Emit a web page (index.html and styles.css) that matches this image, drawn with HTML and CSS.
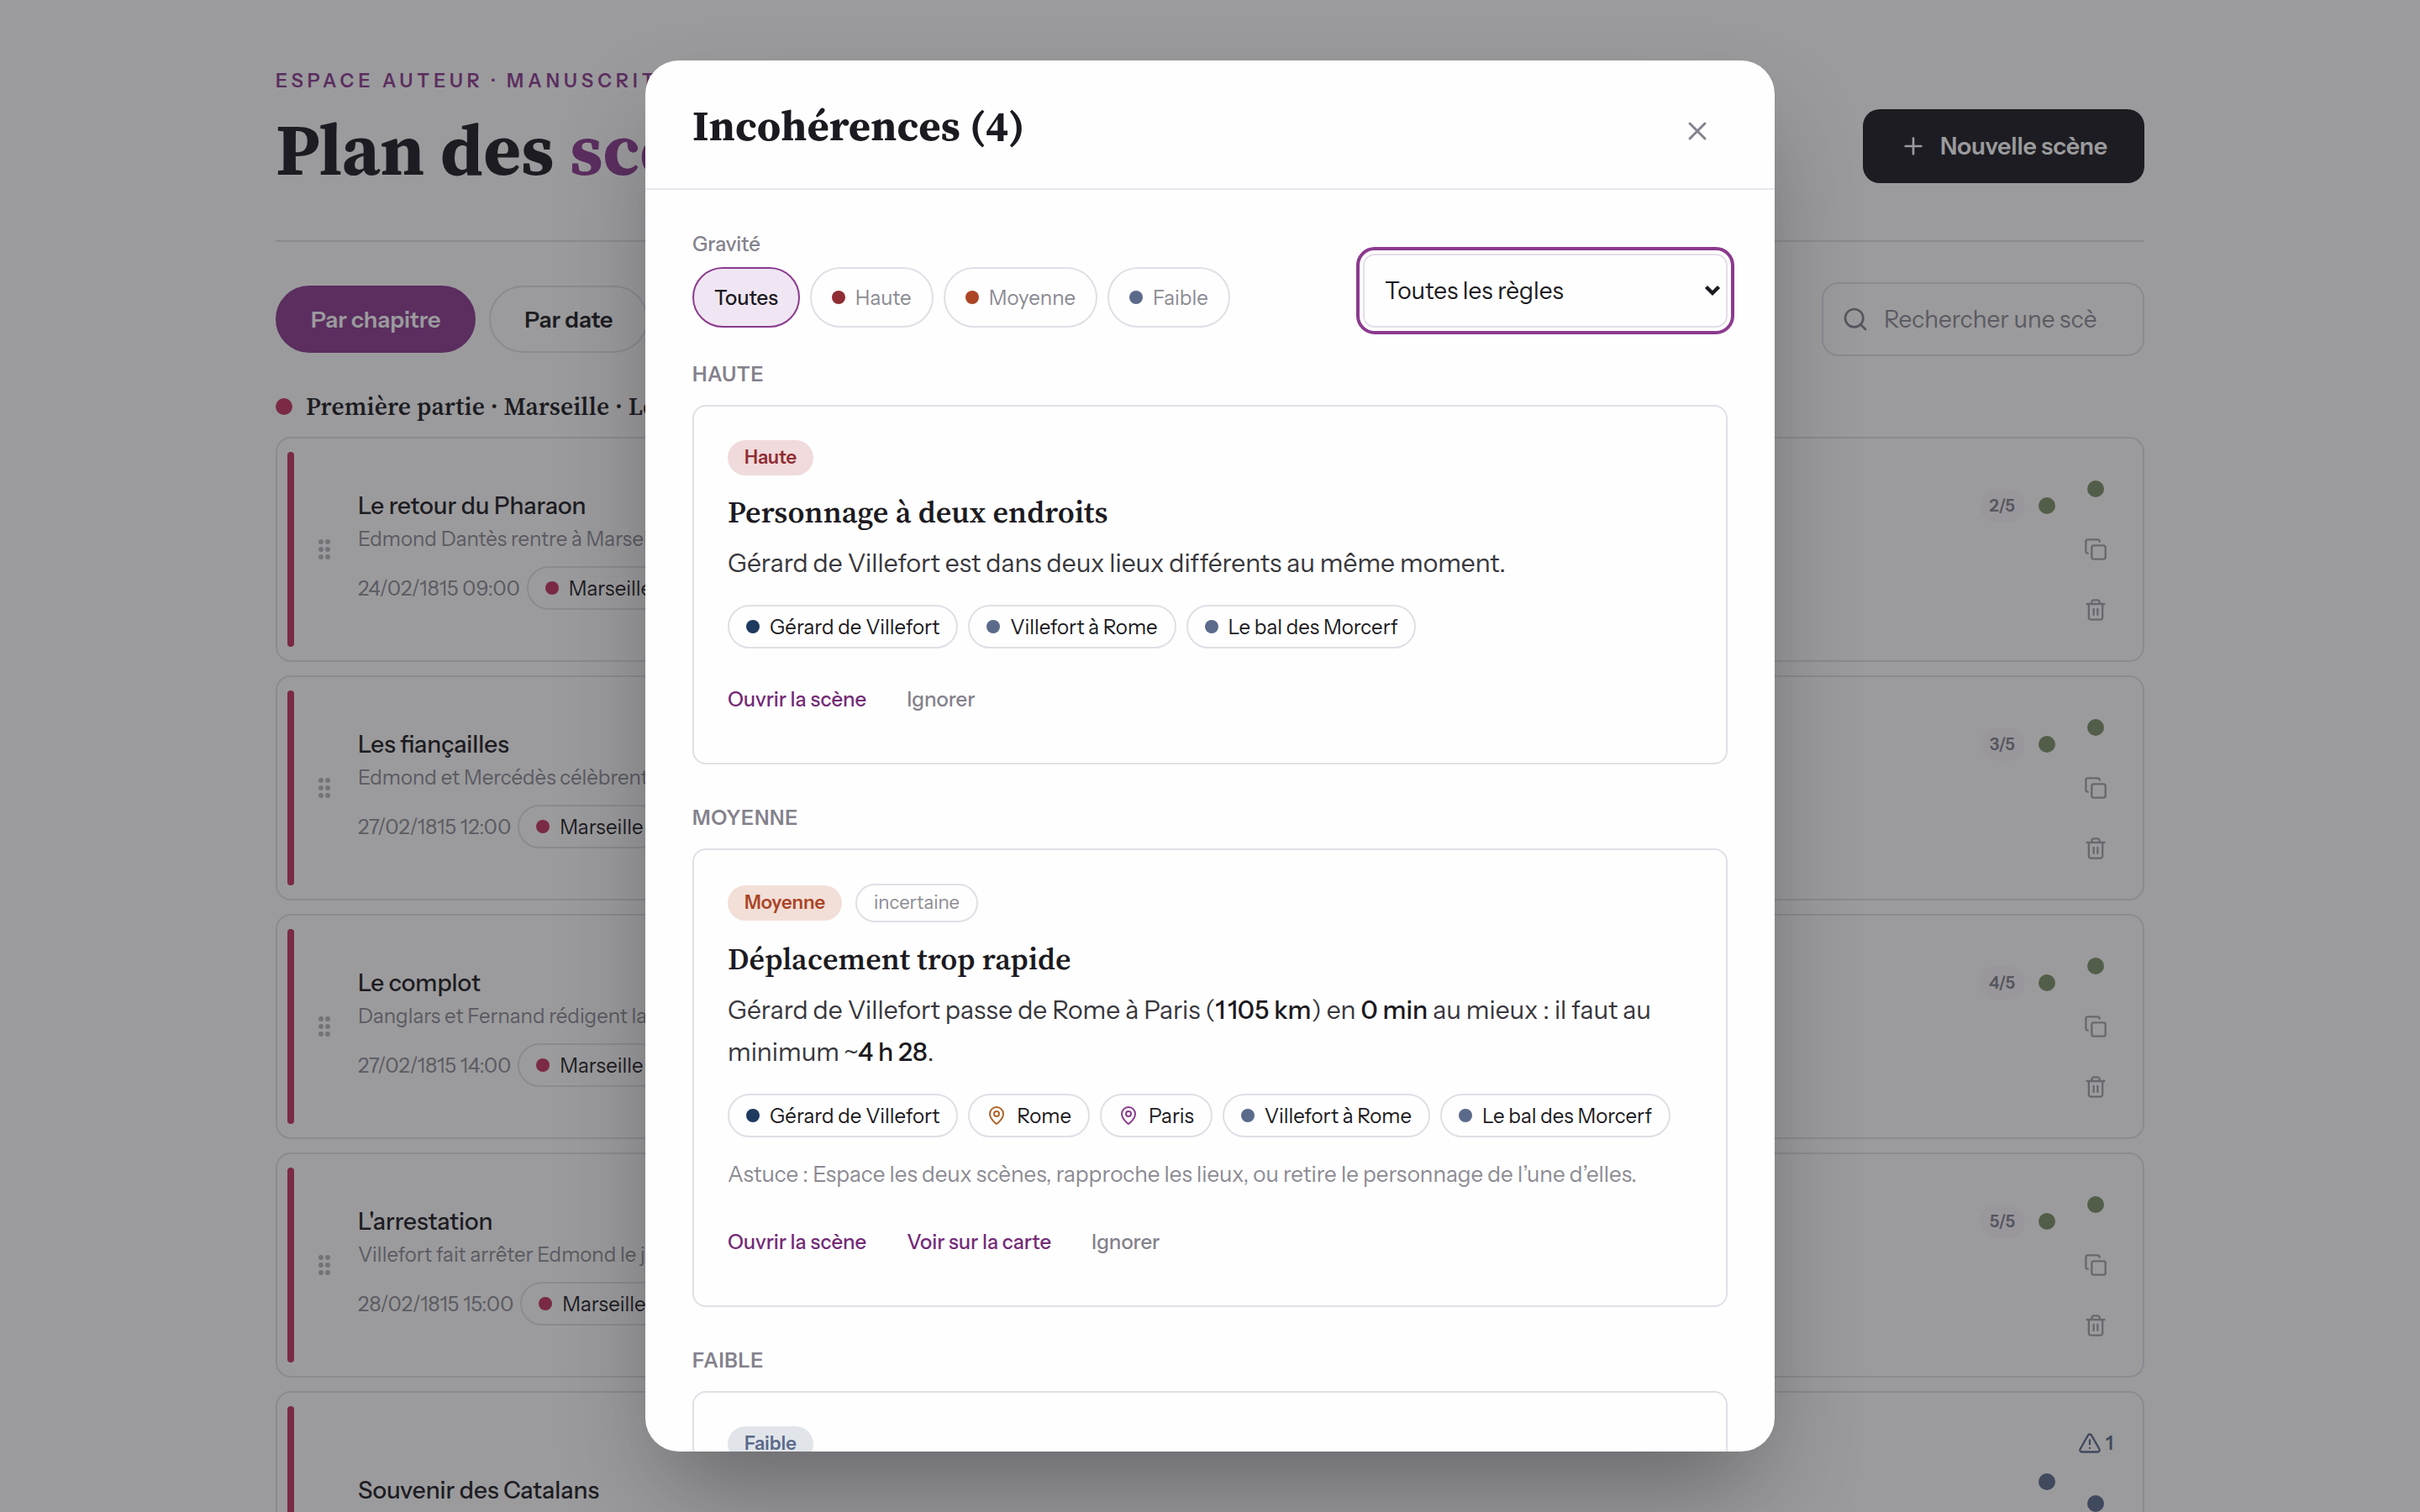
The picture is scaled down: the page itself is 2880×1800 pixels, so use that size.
FILE: index.html
```html
<!DOCTYPE html>
<html lang="fr">
<head>
<meta charset="utf-8">
<title>Plan des scènes</title>
<link rel="stylesheet" href="styles.css">
</head>
<body>
<svg class="sprite" aria-hidden="true">
  <symbol id="i-plus" viewBox="0 0 24 24"><path d="M5 12h14M12 5v14"/></symbol>
  <symbol id="i-search" viewBox="0 0 24 24"><circle cx="11" cy="11" r="8"/><path d="m21 21-4.3-4.3"/></symbol>
  <symbol id="i-x" viewBox="0 0 24 24"><path d="M18 6 6 18M6 6l12 12"/></symbol>
  <symbol id="i-copy" viewBox="0 0 24 24"><rect x="8" y="8" width="14" height="14" rx="2"/><path d="M4 16c-1.1 0-2-.9-2-2V4c0-1.1.9-2 2-2h10c1.1 0 2 .9 2 2"/></symbol>
  <symbol id="i-trash" viewBox="0 0 24 24"><path d="M3 6h18M19 6v14c0 1-1 2-2 2H7c-1 0-2-1-2-2V6M8 6V4c0-1 1-2 2-2h4c1 0 2 1 2 2v2M10 11v6M14 11v6"/></symbol>
  <symbol id="i-alert" viewBox="0 0 24 24"><path d="m21.73 18-8-14a2 2 0 0 0-3.48 0l-8 14A2 2 0 0 0 4 21h16a2 2 0 0 0 1.73-3M12 9v4M12 17h.01"/></symbol>
  <symbol id="i-pin" viewBox="0 0 24 24"><path d="M20 10c0 4.993-5.539 10.193-7.399 11.799a1 1 0 0 1-1.202 0C9.539 20.193 4 14.993 4 10a8 8 0 0 1 16 0"/><circle cx="12" cy="10" r="3"/></symbol>
  <symbol id="i-grip" viewBox="0 0 16 24"><circle cx="4" cy="3" r="3"/><circle cx="12" cy="3" r="3"/><circle cx="4" cy="12" r="3"/><circle cx="12" cy="12" r="3"/><circle cx="4" cy="21" r="3"/><circle cx="12" cy="21" r="3"/></symbol>
</svg>

<main class="page">
  <header class="page-head">
    <div>
      <p class="eyebrow">Espace auteur · Manuscrit</p>
      <h1 class="page-title">Plan des <span class="accent">scènes</span></h1>
    </div>
    <button class="btn-new"><svg class="icon icon-32"><use href="#i-plus"/></svg>Nouvelle scène</button>
  </header>

  <div class="toolbar">
    <div class="tabs">
      <button class="tab tab-on">Par chapitre</button>
      <button class="tab">Par date</button>
    </div>
    <label class="search"><svg class="icon icon-32"><use href="#i-search"/></svg><span class="search-text">Rechercher une scène</span></label>
  </div>

  <h2 class="part"><span class="part-dot"></span>Première partie · Marseille · Le retour</h2>

  <div class="scenes">
    <article class="scene">
      <span class="bar"></span>
      <span class="grip"><svg class="grip-icon"><use href="#i-grip"/></svg></span>
      <div class="scene-main">
        <div class="scene-text">
          <h3 class="scene-title">Le retour du Pharaon</h3>
          <p class="scene-desc">Edmond Dantès rentre à Marseille</p>
          <div class="scene-meta"><span>24/02/1815 09:00</span><span class="chip"><i class="dot crimson"></i>Marseille</span></div>
        </div>
        <div class="status"><span class="count">2/5</span><i class="dot-lg green"></i></div>
      </div>
      <div class="side">
        <span class="cell"><i class="dot-lg green"></i></span>
        <span class="cell"><svg class="icon icon-28"><use href="#i-copy"/></svg></span>
        <span class="cell"><svg class="icon icon-28"><use href="#i-trash"/></svg></span>
      </div>
    </article>

    <article class="scene">
      <span class="bar"></span>
      <span class="grip"><svg class="grip-icon"><use href="#i-grip"/></svg></span>
      <div class="scene-main">
        <div class="scene-text">
          <h3 class="scene-title">Les fiançailles</h3>
          <p class="scene-desc">Edmond et Mercédès célèbrent</p>
          <div class="scene-meta"><span>27/02/1815 12:00</span><span class="chip"><i class="dot crimson"></i>Marseille</span></div>
        </div>
        <div class="status"><span class="count">3/5</span><i class="dot-lg green"></i></div>
      </div>
      <div class="side">
        <span class="cell"><i class="dot-lg green"></i></span>
        <span class="cell"><svg class="icon icon-28"><use href="#i-copy"/></svg></span>
        <span class="cell"><svg class="icon icon-28"><use href="#i-trash"/></svg></span>
      </div>
    </article>

    <article class="scene">
      <span class="bar"></span>
      <span class="grip"><svg class="grip-icon"><use href="#i-grip"/></svg></span>
      <div class="scene-main">
        <div class="scene-text">
          <h3 class="scene-title">Le complot</h3>
          <p class="scene-desc">Danglars et Fernand rédigent la</p>
          <div class="scene-meta"><span>27/02/1815 14:00</span><span class="chip"><i class="dot crimson"></i>Marseille</span></div>
        </div>
        <div class="status"><span class="count">4/5</span><i class="dot-lg green"></i></div>
      </div>
      <div class="side">
        <span class="cell"><i class="dot-lg green"></i></span>
        <span class="cell"><svg class="icon icon-28"><use href="#i-copy"/></svg></span>
        <span class="cell"><svg class="icon icon-28"><use href="#i-trash"/></svg></span>
      </div>
    </article>

    <article class="scene">
      <span class="bar"></span>
      <span class="grip"><svg class="grip-icon"><use href="#i-grip"/></svg></span>
      <div class="scene-main">
        <div class="scene-text">
          <h3 class="scene-title">L'arrestation</h3>
          <p class="scene-desc">Villefort fait arrêter Edmond le jour</p>
          <div class="scene-meta"><span>28/02/1815 15:00</span><span class="chip"><i class="dot crimson"></i>Marseille</span></div>
        </div>
        <div class="status"><span class="count">5/5</span><i class="dot-lg green"></i></div>
      </div>
      <div class="side">
        <span class="cell"><i class="dot-lg green"></i></span>
        <span class="cell"><svg class="icon icon-28"><use href="#i-copy"/></svg></span>
        <span class="cell"><svg class="icon icon-28"><use href="#i-trash"/></svg></span>
      </div>
    </article>

    <article class="scene">
      <span class="bar"></span>
      <span class="grip"></span>
      <div class="scene-main">
        <div class="scene-text">
          <h3 class="scene-title">Souvenir des Catalans</h3>
        </div>
        <div class="status"><i class="dot-lg slate"></i></div>
      </div>
      <div class="side">
        <span class="cell alert"><svg class="icon icon-28"><use href="#i-alert"/></svg>1</span>
        <span class="cell"><i class="dot-lg slate"></i></span>
        <span class="cell"></span>
        <span class="cell"></span>
      </div>
    </article>
  </div>
</main>

<div class="overlay">
  <section class="modal" role="dialog" aria-modal="true">
    <header class="modal-head">
      <h2 class="modal-title">Incohérences (4)</h2>
      <button class="close" aria-label="Fermer"><svg class="icon icon-36"><use href="#i-x"/></svg></button>
    </header>

    <div class="modal-body">
      <div class="filters">
        <div>
          <p class="filter-label">Gravité</p>
          <div class="pills">
            <button class="pill pill-on">Toutes</button>
            <button class="pill"><i class="dot red"></i>Haute</button>
            <button class="pill"><i class="dot rust"></i>Moyenne</button>
            <button class="pill"><i class="dot slate"></i>Faible</button>
          </div>
        </div>
        <div class="select" tabindex="0">Toutes les règles<svg class="chevron" viewBox="0 0 20 14"><path d="m2.5 2.5 7.500 7.500 7.500-7.500"/></svg></div>
      </div>

      <h3 class="group">Haute</h3>
      <article class="issue">
        <div class="badges"><span class="badge badge-red">Haute</span></div>
        <h4 class="issue-title">Personnage à deux endroits</h4>
        <p class="issue-text">Gérard de Villefort est dans deux lieux différents au même moment.</p>
        <div class="chips">
          <span class="chip"><i class="dot navy"></i>Gérard de Villefort</span>
          <span class="chip"><i class="dot slate"></i>Villefort à Rome</span>
          <span class="chip"><i class="dot slate"></i>Le bal des Morcerf</span>
        </div>
        <div class="actions"><a class="link">Ouvrir la scène</a><a class="link link-muted">Ignorer</a></div>
      </article>

      <h3 class="group">Moyenne</h3>
      <article class="issue">
        <div class="badges"><span class="badge badge-rust">Moyenne</span><span class="badge badge-outline">incertaine</span></div>
        <h4 class="issue-title">Déplacement trop rapide</h4>
        <p class="issue-text">Gérard de Villefort passe de Rome à Paris (<strong>1&#8239;105 km</strong>) en <strong>0 min</strong> au mieux : il faut au minimum ~<strong>4 h 28</strong>.</p>
        <div class="chips">
          <span class="chip"><i class="dot navy"></i>Gérard de Villefort</span>
          <span class="chip"><svg class="icon icon-24 pin-amber"><use href="#i-pin"/></svg>Rome</span>
          <span class="chip"><svg class="icon icon-24 pin-purple"><use href="#i-pin"/></svg>Paris</span>
          <span class="chip"><i class="dot slate"></i>Villefort à Rome</span>
          <span class="chip"><i class="dot slate"></i>Le bal des Morcerf</span>
        </div>
        <p class="tip">Astuce : Espace les deux scènes, rapproche les lieux, ou retire le personnage de l’une d’elles.</p>
        <div class="actions"><a class="link">Ouvrir la scène</a><a class="link">Voir sur la carte</a><a class="link link-muted">Ignorer</a></div>
      </article>

      <h3 class="group">Faible</h3>
      <article class="issue issue-cut">
        <div class="badges"><span class="badge badge-slate">Faible</span></div>
      </article>
    </div>
  </section>
</div>
</body>
</html>
```
FILE: styles.css
```css
:root {
  --ink: #1c1a21;
  --text: #38373c;
  --muted: #84818c;
  --soft: #8c8a93;
  --line: #e0dfe6;
  --purple: #8b3a8e;
  --purple-dark: #742a77;
  --sans: "Instrument Sans", Roboto, "Liberation Sans", sans-serif;
  --serif: "Source Serif 4", "Liberation Serif", serif;
}

* { box-sizing: border-box; margin: 0; padding: 0; }

body {
  height: 1800px;
  overflow: hidden;
  background: #fdfdfe;
  color: var(--ink);
  font-family: var(--sans);
  font-size: 28px;
}

button { border: 0; background: none; font: inherit; color: inherit; }

.sprite { position: absolute; width: 0; height: 0; }

.icon {
  flex: none;
  fill: none;
  stroke: currentColor;
  stroke-width: 2;
  stroke-linecap: round;
  stroke-linejoin: round;
}
.icon-24 { width: 24px; height: 24px; }
.icon-28 { width: 28px; height: 28px; }
.icon-32 { width: 32px; height: 32px; }
.icon-36 { width: 36px; height: 36px; }

.dot { flex: none; width: 16px; height: 16px; border-radius: 50%; }
.dot-lg { flex: none; width: 20px; height: 20px; border-radius: 50%; }
.crimson { background: #c2335f; }
.green { background: #7c9168; }
.slate { background: #5b6a8a; }
.red { background: #8f2d33; }
.rust { background: #ab4526; }
.navy { background: #1f3a5f; }

/* Page */

.page { width: 2224px; height: 1800px; margin: 0 auto; padding-top: 78px; overflow: hidden; }

.page-head {
  display: flex;
  justify-content: space-between;
  align-items: flex-end;
  padding-bottom: 68px;
  border-bottom: 2px solid var(--line);
}

.eyebrow {
  margin-bottom: 24px;
  color: var(--purple);
  font-size: 22.4px;
  font-weight: 600;
  line-height: 36px;
  letter-spacing: .228em;
  text-transform: uppercase;
}

.page-title {
  font-family: var(--serif);
  font-size: 86px;
  font-weight: 700;
  line-height: 80px;
  letter-spacing: .002em;
}
.accent { color: var(--purple); }

.btn-new {
  display: flex;
  align-items: center;
  gap: 16px;
  height: 88px;
  padding: 0 44px;
  border-radius: 20px;
  background: var(--ink);
  color: #fdfdfe;
  font-weight: 600;
}

.toolbar {
  display: flex;
  justify-content: space-between;
  align-items: center;
  margin-top: 48px;
}
.tabs { display: flex; gap: 16px; }
.tab {
  height: 80px;
  padding: 0 40px;
  border: 2px solid var(--line);
  border-radius: 40px;
  font-size: 27px;
  font-weight: 600;
}
.tab-on { border-color: var(--purple); background: var(--purple); color: #fdfdfe; }

.search {
  display: flex;
  align-items: center;
  gap: 18px;
  width: 384px;
  height: 88px;
  padding: 0 53px 0 22px;
  border: 2px solid var(--line);
  border-radius: 20px;
  color: var(--muted);
}
.search-text { overflow: hidden; white-space: nowrap; color: var(--soft); }

.part {
  display: flex;
  align-items: center;
  gap: 16px;
  margin: 40px 0 16px;
  font-family: var(--serif);
  font-size: 29.5px;
  font-weight: 600;
  line-height: 40px;
  letter-spacing: .004em;
}
.part-dot { width: 20px; height: 20px; border-radius: 50%; background: #c2335f; }

.scenes { display: grid; gap: 16px; }

.scene {
  display: flex;
  padding: 16px 20px 16px 12px;
  border: 2px solid var(--line);
  border-radius: 18px;
}
.bar { flex: none; width: 8px; border-radius: 4px; background: #c2335f; }
.grip {
  display: flex;
  flex: none;
  align-items: center;
  justify-content: center;
  width: 72px;
  margin-right: 4px;
  color: #b7b5bd;
}
.grip-icon { width: 16px; height: 24px; fill: currentColor; }

.scene-main { display: flex; flex: 1; align-items: center; justify-content: space-between; height: 144px; align-self: center; }
.scene-text { height: 144px; }
.scene-title { font-size: 28px; font-weight: 500; line-height: 40px; }
.scene-desc { color: var(--soft); font-size: 24px; line-height: 40px; white-space: nowrap; }
.scene-meta {
  display: flex;
  align-items: center;
  gap: 8px;
  margin-top: 12px;
  color: var(--soft);
  font-size: 24px;
}
.status { display: flex; align-self: flex-start; align-items: center; gap: 16px; margin-right: 12px; }
.count {
  height: 40px;
  padding: 0 12px;
  border-radius: 20px;
  background: #faf7fb;
  color: var(--muted);
  font-size: 20px;
  font-weight: 600;
  line-height: 40px;
}

.side { padding: 8px 0; color: #a3a1a9; }
.cell { display: flex; align-items: center; justify-content: center; width: 72px; height: 72px; }
.alert { gap: 5px; color: #5b6a8a; font-size: 22px; font-weight: 600; }

.chip {
  display: inline-flex;
  align-items: center;
  gap: 12px;
  height: 52px;
  padding: 0 20px;
  border: 2px solid var(--line);
  border-radius: 26px;
  color: var(--ink);
  font-size: 24px;
  white-space: nowrap;
}

/* Dialog */

.overlay {
  position: absolute;
  inset: 0;
  display: flex;
  align-items: center;
  justify-content: center;
  background: rgba(32, 32, 36, .445);
}

.modal {
  display: flex;
  flex-direction: column;
  width: 1344px;
  height: 1656px;
  overflow: hidden;
  border-radius: 40px;
  background: #fefefe;
  box-shadow: 0 60px 120px -24px rgba(28, 26, 33, .42);
}

.modal-head {
  display: flex;
  flex: none;
  justify-content: space-between;
  align-items: flex-start;
  padding: 48px 56px 32px;
  border-bottom: 2px solid #e9e8ef;
}
.modal-title {
  font-family: var(--serif);
  font-size: 50.5px;
  font-weight: 700;
  line-height: 60px;
  letter-spacing: .003em;
}
.close {
  display: flex;
  align-items: center;
  justify-content: center;
  width: 72px;
  height: 72px;
  color: var(--muted);
}

.modal-body { flex: 1; min-height: 0; overflow: hidden; padding: 50px 56px 0; }

.filters { display: flex; justify-content: space-between; align-items: flex-end; margin-bottom: 38px; }
.filter-label { margin-bottom: 12px; color: var(--muted); font-size: 24px; font-weight: 500; line-height: 30px; }
.pills { display: flex; gap: 12px; }
.pill {
  display: flex;
  align-items: center;
  gap: 12px;
  height: 72px;
  padding: 0 24px;
  border: 2px solid var(--line);
  border-radius: 36px;
  color: var(--soft);
  font-size: 24px;
}
.pill-on { border-color: var(--purple); background: #f0e6f3; color: var(--ink); font-weight: 500; }

.select {
  display: flex;
  align-items: center;
  justify-content: space-between;
  width: 434px;
  height: 88px;
  padding: 0 6px 0 24px;
  border: 2px solid #e3dde9;
  border-radius: 14px;
  outline: 4px solid var(--purple);
  outline-offset: 4px;
}
.chevron { width: 20px; height: 14px; fill: none; stroke: currentColor; stroke-width: 4.4; }

.group {
  margin-bottom: 18px;
  color: var(--muted);
  font-size: 24px;
  font-weight: 600;
  line-height: 36px;
  letter-spacing: .03em;
  text-transform: uppercase;
}

.issue {
  margin-bottom: 46px;
  padding: 40px;
  border: 2px solid var(--line);
  border-radius: 16px;
}
.issue-cut { height: 200px; }

.badges { display: flex; align-items: center; gap: 16px; margin-bottom: 22px; }
.badge {
  height: 42px;
  padding: 0 20px;
  border-radius: 23px;
  font-size: 22px;
  font-weight: 600;
  line-height: 42px;
}
.badge-red { background: #f0dadb; color: #8f2d33; }
.badge-rust { background: #f2dfd8; color: #ab4526; }
.badge-slate { background: #e1e5ea; color: #5b6a8a; }
.badge-outline { height: 46px; border: 2px solid var(--line); color: var(--soft); font-weight: 400; }

.issue-title {
  margin-bottom: 14px;
  font-family: var(--serif);
  font-size: 36px;
  font-weight: 600;
  line-height: 44px;
  letter-spacing: .003em;
}
.issue-text { color: var(--text); font-size: 30px; line-height: 50px; }
.issue-text strong { color: var(--ink); font-weight: 500; }

.chips { display: flex; gap: 12px; margin-top: 24px; }
.pin-amber { color: #b0642c; }
.pin-purple { color: var(--purple); }

.tip { margin-top: 24px; color: var(--soft); font-size: 26px; line-height: 40px; }

.actions { display: flex; align-items: center; gap: 48px; height: 72px; margin-top: 24px; }
.link { color: var(--purple-dark); font-size: 24px; font-weight: 500; }
.link-muted { color: var(--muted); }
```
